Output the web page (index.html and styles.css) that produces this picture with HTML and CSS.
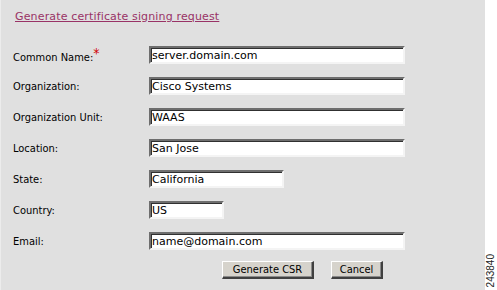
FILE: index.html
```html
<!DOCTYPE html>
<html lang="en">
<head>
  <meta charset="UTF-8">
  <meta name="viewport" content="width=device-width, initial-scale=1.0">
  <title>Generate CSR</title>
  <link rel="stylesheet" href="styles.css">
</head>
<body>
  <div class="page">
    <div class="panel">
      <a class="csr-link" href="#">Generate certificate signing request</a>

      <form class="csr-form">
        <div class="row">
          <label for="cn">Common Name:<span class="req">*</span></label>
          <input id="cn" class="field wide" type="text" value="server.domain.com">
        </div>
        <div class="row">
          <label for="org">Organization:</label>
          <input id="org" class="field wide" type="text" value="Cisco Systems">
        </div>
        <div class="row">
          <label for="unit">Organization Unit:</label>
          <input id="unit" class="field wide" type="text" value="WAAS">
        </div>
        <div class="row">
          <label for="loc">Location:</label>
          <input id="loc" class="field wide" type="text" value="San Jose">
        </div>
        <div class="row">
          <label for="state">State:</label>
          <input id="state" class="field medium" type="text" value="California">
        </div>
        <div class="row">
          <label for="country">Country:</label>
          <input id="country" class="field short" type="text" value="US">
        </div>
        <div class="row">
          <label for="email">Email:</label>
          <input id="email" class="field wide" type="text" value="name@domain.com">
        </div>

        <div class="actions">
          <button type="button" class="btn btn-generate">Generate CSR</button>
          <button type="button" class="btn btn-cancel">Cancel</button>
        </div>
      </form>
    </div>

    <div class="strip">
      <span class="fig-num">243840</span>
    </div>
  </div>
</body>
</html>
```

FILE: styles.css
```css
* {
  margin: 0;
  padding: 0;
  box-sizing: border-box;
}

body {
  font-family: "DejaVu Sans Condensed", "DejaVu Sans", sans-serif;
  font-size: 11px;
  color: #000;
  background-color: #fff;
}

.page {
  display: flex;
  width: 497px;
  height: 290px;
}

.panel {
  width: 485px;
  height: 100%;
  background-color: #e0e0e0;
  border-left: 1px solid #ececec;
  padding: 10px 0 0 12px;
}

.csr-link {
  display: inline-block;
  margin-left: 2px;
  font-family: "DejaVu Sans", sans-serif;
  letter-spacing: 0.15px;
  color: #993366;
  text-decoration: underline;
  line-height: 13px;
}

.csr-form {
  margin-top: 23px;
}

.row {
  display: grid;
  grid-template-columns: 136px auto;
  align-items: center;
  height: 18px;
  margin-bottom: 13px;
}

.row label {
  padding-top: 1px;
}

.req {
  color: #d00000;
  font-size: 14px;
  position: relative;
  top: -3px;
}

.field {
  height: 18px;
  font-family: "DejaVu Sans", sans-serif;
  font-size: 11px;
  color: #000;
  background-color: #fff;
  padding: 0 0 0 1px;
  border-style: solid;
  border-width: 2px;
  border-color: #6e6e6e #f4f4f4 #f4f4f4 #6e6e6e;
  box-shadow: inset 1px 1px 0 #303030;
  outline: none;
}

.field.wide {
  width: 256px;
}

.field.medium {
  width: 135px;
}

.field.short {
  width: 75px;
}

.actions {
  display: flex;
  gap: 17px;
  margin-top: -2px;
  padding-left: 209px;
}

.btn {
  height: 18px;
  font-family: inherit;
  font-size: 11px;
  color: #000;
  background-color: #d6d3cc;
  border-style: solid;
  border-width: 1px 2px 2px 1px;
  border-color: #fff #404040 #404040 #fff;
  box-shadow: inset -1px -1px 0 #8a8a8a;
  cursor: pointer;
}

.btn-generate {
  width: 92px;
}

.btn-cancel {
  width: 52px;
}

.strip {
  flex: 1;
  display: flex;
  flex-direction: column;
  justify-content: flex-end;
  align-items: center;
  padding-bottom: 3px;
}

.fig-num {
  font-family: "Liberation Sans", Arial, sans-serif;
  font-size: 10px;
  color: #222;
  writing-mode: vertical-rl;
  transform: rotate(180deg);
  line-height: 10px;
}
```
